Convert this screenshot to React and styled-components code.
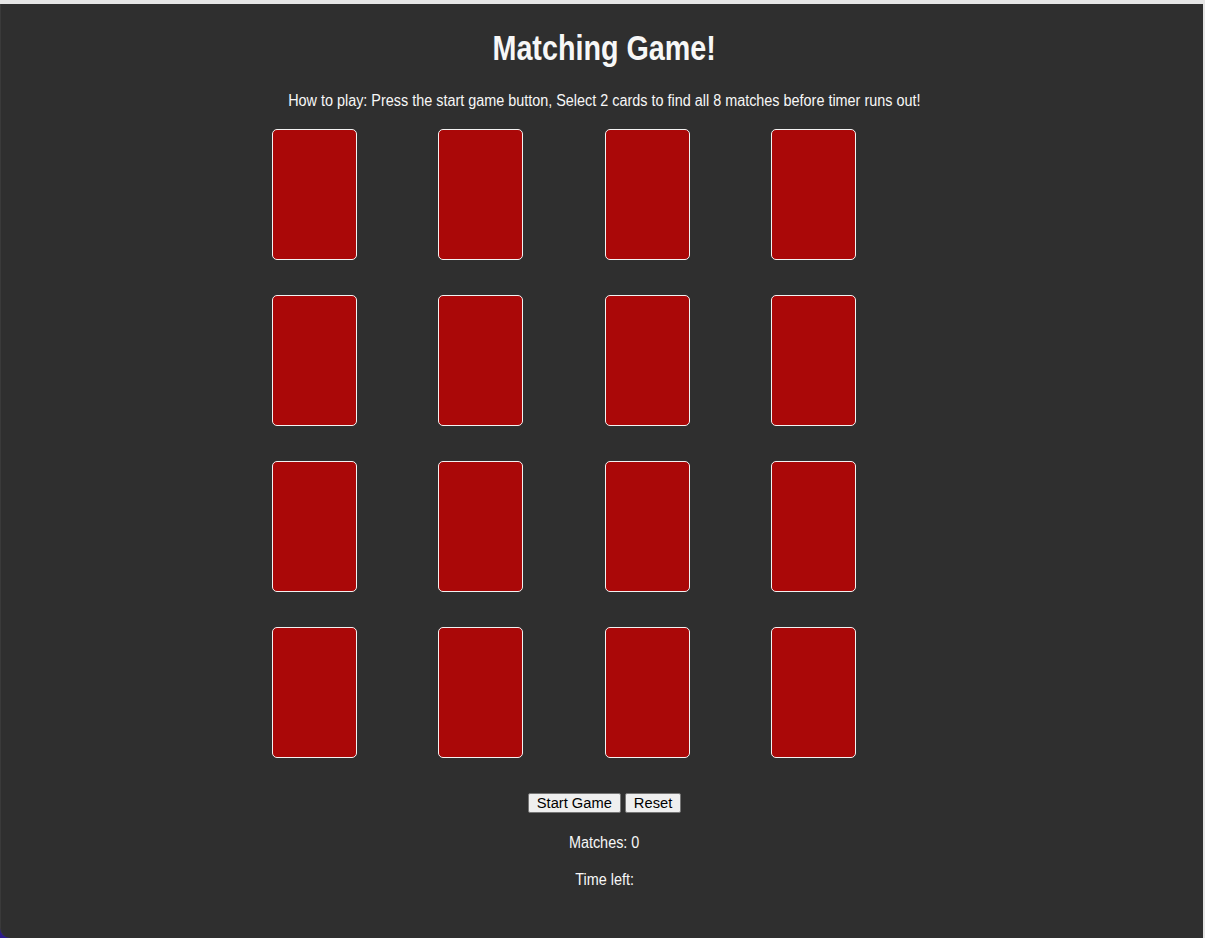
import React from 'react'
import styled, { createGlobalStyle } from 'styled-components'

const GlobalStyle = createGlobalStyle`
    html, body {
        margin: 0;
        padding: 0;
        background: #e6e6e6;
    }
`

const Page = styled.div`
    padding-top: 4px;
    height: 938px;
    box-sizing: border-box;
    background: linear-gradient(#2c1a8c, #2c1a8c) left bottom / 14px 14px no-repeat, #e6e6e6;
`

const Panel = styled.div`
    width: 1203px;
    height: 934px;
    box-sizing: border-box;
    background: #2f2f2f;
    border-left: 1px solid #3a3a3a;
    border-bottom-left-radius: 10px;
    color: #f7f7f7;
    font-family: "Liberation Sans", Arial, sans-serif;
    text-align: center;
    padding: 24px 0 0 5px;
`

// Arial Narrow look: regular Arial squeezed horizontally
const Narrow = styled.span`
    display: inline-block;
    white-space: nowrap;
    transform: scaleX(${props => props.squeeze || 0.9});
`

const Title = styled.h1`
    font-size: 35px;
    font-weight: bold;
    margin: 0 0 24px;
`

const Rules = styled.div`
    font-size: 16px;
    margin-bottom: 19px;
`

const Board = styled.div`
    display: grid;
    grid-template-columns: repeat(4, 166.33px);
    grid-auto-rows: 131px;
    row-gap: 35px;
    width: 665px;
    margin: 0 auto;
`

const Card = styled.div`
    width: 85px;
    height: 131px;
    box-sizing: border-box;
    border: 1px solid #f2f2f2;
    border-radius: 5px;
    background: ${props => props.flipped ? '#f2f2f2' : '#aa0808'};
`

const Controls = styled.div`
    display: flex;
    justify-content: center;
    gap: 4px;
    margin-top: 35px;
`

const Button = styled.button`
    font-family: Arial, "Liberation Sans", sans-serif;
    font-size: 14.7px;
    height: 20px;
    padding: 0 8px;
    margin: 0;
    color: #000;
    background: #efefef;
    border: 1px solid #767676;
    border-radius: 2px;
`

const Info = styled.p`
    font-size: 16px;
    margin: ${props => props.first ? '21px' : '19px'} 0 0;
`

const cards = Array.from({ length: 16 }, (_, i) => i)

export default function App() {
    return (
        <>
            <GlobalStyle />
            <Page>
                <Panel>
                    <Title><Narrow squeeze={0.82}>Matching Game!</Narrow></Title>
                    <Rules><Narrow>How to play: Press the start game button, Select 2 cards to find all 8 matches before timer runs out!</Narrow></Rules>
                    <Board>
                        {cards.map(c => <Card key={c} />)}
                    </Board>
                    <Controls>
                        <Button>Start Game</Button>
                        <Button>Reset</Button>
                    </Controls>
                    <Info first><Narrow>Matches: 0</Narrow></Info>
                    <Info><Narrow>Time left:</Narrow></Info>
                </Panel>
            </Page>
        </>
    )
}
